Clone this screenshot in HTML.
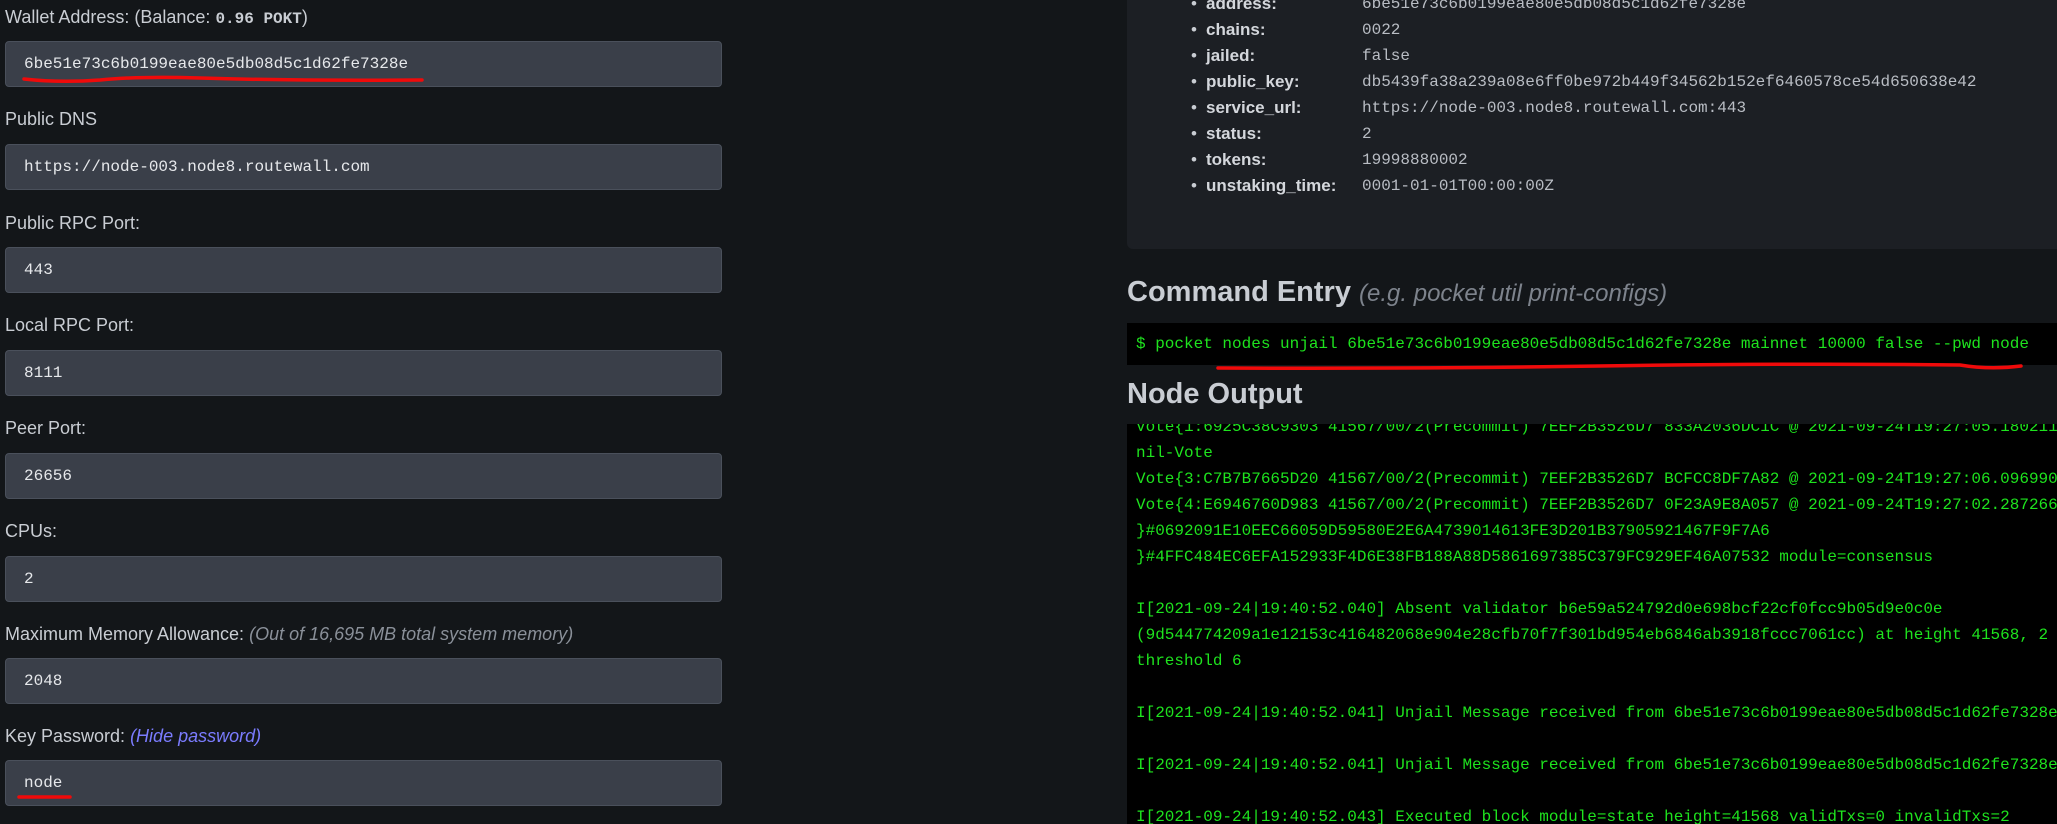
<!DOCTYPE html>
<html><head><meta charset="utf-8"><style>
*{margin:0;padding:0;box-sizing:border-box}
body{width:2057px;height:824px;overflow:hidden;background:#131619;font-family:"Liberation Sans",sans-serif;color:#c9cdd3;position:relative}
.lbl{position:absolute;left:5px;font-size:18px;line-height:22px}
.lbl i{color:#8a9099}
.lbl i.b{color:#7b7cff}
.inp{position:absolute;left:5px;width:717px;height:46px;background:#3a3f49;border:1px solid #4a505b;border-radius:4px;font-family:"Liberation Mono",monospace;font-size:16px;color:#e6e8eb;padding-left:18px;line-height:44px}
.panel{position:absolute;left:1127px;top:-10px;width:940px;height:259px;background:#1c1f24;border-radius:6px}
ul{list-style:none;position:absolute;left:1191px;top:-9px}
li{height:26px;line-height:26px;font-size:17px;position:relative;white-space:nowrap}
li:before{content:"•";position:absolute;left:0;color:#c9cdd3}
li b{position:absolute;left:15px;color:#d4d7dc}
li span{position:absolute;left:171px;font-family:"Liberation Mono",monospace;font-size:16px;color:#b9bdc4}
h2{position:absolute;left:1127px;font-size:29px;font-weight:bold;color:#c9cdd3;white-space:nowrap}
h2 i{font-weight:normal;font-size:24px;color:#7d838c}
.cmd{position:absolute;left:1127px;top:323px;width:930px;height:42px;background:#000;color:#1ee31e;font-family:"Liberation Mono",monospace;font-size:16px;line-height:42px;padding-left:9px;white-space:pre}
.out{position:absolute;left:1127px;top:424px;width:930px;height:400px;background:#000;overflow:hidden}
.out pre{color:#1ee31e;font-family:"Liberation Mono",monospace;font-size:16px;line-height:26px;margin-top:-10px;padding-left:9px}
</style></head><body>
<div class="lbl" style="top:6px">Wallet Address: (Balance: <b style="font-family:'Liberation Mono',monospace;font-size:16px">0.96 POKT</b>)</div>
<div class="inp" style="top:41px">6be51e73c6b0199eae80e5db08d5c1d62fe7328e</div>
<div class="lbl" style="top:108px">Public DNS</div>
<div class="inp" style="top:144px">https://node-003.node8.routewall.com</div>
<div class="lbl" style="top:212px">Public RPC Port:</div>
<div class="inp" style="top:247px">443</div>
<div class="lbl" style="top:314px">Local RPC Port:</div>
<div class="inp" style="top:350px">8111</div>
<div class="lbl" style="top:417px">Peer Port:</div>
<div class="inp" style="top:453px">26656</div>
<div class="lbl" style="top:520px">CPUs:</div>
<div class="inp" style="top:556px">2</div>
<div class="lbl" style="top:623px">Maximum Memory Allowance: <i>(Out of 16,695 MB total system memory)</i></div>
<div class="inp" style="top:658px">2048</div>
<div class="lbl" style="top:725px">Key Password: <i class="b">(Hide password)</i></div>
<div class="inp" style="top:760px">node</div>

<div class="panel"></div>
<ul>
<li><b>address:</b><span>6be51e73c6b0199eae80e5db08d5c1d62fe7328e</span></li>
<li><b>chains:</b><span>0022</span></li>
<li><b>jailed:</b><span>false</span></li>
<li><b>public_key:</b><span>db5439fa38a239a08e6ff0be972b449f34562b152ef6460578ce54d650638e42</span></li>
<li><b>service_url:</b><span>https://node-003.node8.routewall.com:443</span></li>
<li><b>status:</b><span>2</span></li>
<li><b>tokens:</b><span>19998880002</span></li>
<li><b>unstaking_time:</b><span>0001-01-01T00:00:00Z</span></li>
</ul>
<h2 style="top:276px">Command Entry <i>(e.g. pocket util print-configs)</i></h2>
<div class="cmd">$ pocket nodes unjail 6be51e73c6b0199eae80e5db08d5c1d62fe7328e mainnet 10000 false --pwd node</div>
<h2 style="top:378px">Node Output</h2>
<div class="out"><pre>Vote{1:6925C38C9303 41567/00/2(Precommit) 7EEF2B3526D7 833A2036DC1C @ 2021-09-24T19:27:05.180211
nil-Vote
Vote{3:C7B7B7665D20 41567/00/2(Precommit) 7EEF2B3526D7 BCFCC8DF7A82 @ 2021-09-24T19:27:06.096990
Vote{4:E6946760D983 41567/00/2(Precommit) 7EEF2B3526D7 0F23A9E8A057 @ 2021-09-24T19:27:02.287266
}#0692091E10EEC66059D59580E2E6A4739014613FE3D201B37905921467F9F7A6
}#4FFC484EC6EFA152933F4D6E38FB188A88D5861697385C379FC929EF46A07532 module=consensus

I[2021-09-24|19:40:52.040] Absent validator b6e59a524792d0e698bcf22cf0fcc9b05d9e0c0e
(9d544774209a1e12153c416482068e904e28cfb70f7f301bd954eb6846ab3918fccc7061cc) at height 41568, 2
threshold 6

I[2021-09-24|19:40:52.041] Unjail Message received from 6be51e73c6b0199eae80e5db08d5c1d62fe7328e

I[2021-09-24|19:40:52.041] Unjail Message received from 6be51e73c6b0199eae80e5db08d5c1d62fe7328e

I[2021-09-24|19:40:52.043] Executed block module=state height=41568 validTxs=0 invalidTxs=2</pre></div>

<svg style="position:absolute;left:0;top:0" width="2057" height="824">
<g fill="none" stroke="#f00a0a" stroke-width="3.5" stroke-linecap="round">
<path d="M24 79 Q60 83 100 80 Q140 76 200 78 Q300 81 422 80"/>
<path d="M1218 368 Q1400 369 1600 366 Q1800 363 1960 365 Q1990 370 2021 366"/>
<path d="M19 797 L70 797"/>
</g></svg>
</body></html>
